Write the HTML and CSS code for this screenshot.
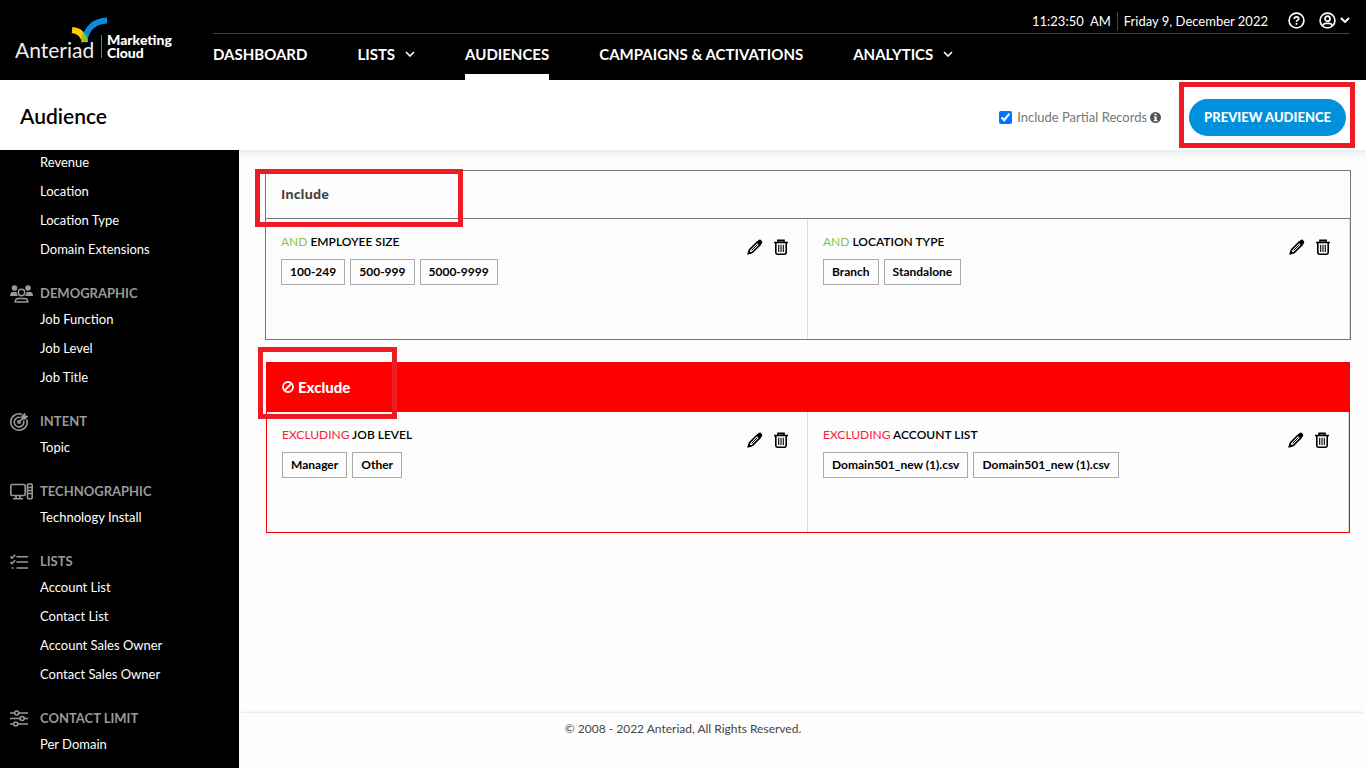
FILE: index.html
```html
<!DOCTYPE html>
<html lang="en">
<head>
<meta charset="utf-8">
<title>Audience</title>
<link rel="stylesheet" href="styles.css">
</head>
<body>
<svg class="defs" aria-hidden="true">
  <symbol id="pencil" viewBox="0 0 16 16">
    <path d="M1.2 14.8 2.6 10.6 10.4 2.8 13.2 5.6 5.4 13.4Z" fill="none" stroke="currentColor" stroke-width="1.6" stroke-linejoin="round"/>
    <path d="M9.3 3.4 11.6 1.1Q13 0 14.4 1.4 16 3 14.9 4.4L12.6 6.7ZM0.4 15.6 2 11.4 4.6 14Z" fill="currentColor"/>
    <path d="M4.6 11.4 10.4 5.6" stroke="currentColor" stroke-width="1"/>
  </symbol>
  <symbol id="trash" viewBox="0 0 16 16">
    <path d="M1 3.500H15M5 3V1.200H11V3M2.800 3.500V13.600Q2.800 15.200 4.200 15.200H11.800Q13.200 15.200 13.200 13.600V3.500" fill="none" stroke="currentColor" stroke-width="1.600"/>
    <path d="M5 1H11V3.500H5Z" fill="currentColor" opacity=".5"/>
    <path d="M5.700 5.800V13M8 5.800V13M10.300 5.800V13" stroke="currentColor" stroke-width="1.100"/>
  </symbol>
  <symbol id="chevron" viewBox="0 0 10 6">
    <path d="M1 1 5 5 9 1" fill="none" stroke="currentColor"/>
  </symbol>
</svg>

<header class="top">
  <a class="logo" href="#" aria-label="Anteriad Marketing Cloud">
    <svg width="160" height="48" viewBox="0 0 160 48">
      <path d="M57 15Q68 16 69.500 27" fill="none" stroke="#fecb00" stroke-width="6"/>
      <path d="M92 5.500C79 6 71 14 69 27" fill="none" stroke="#0a8be0" stroke-width="6"/>
      <path d="M68 17.500Q72.600 20 73 27H66.500Q66 22 68 17.500Z" fill="#8fc31f"/>
      <text class="logo-name" x="0" y="43">Anteriad</text>
      <path d="M86.500 20V43" stroke="#777"/>
      <text class="logo-sub" x="92" y="30">Marketing</text>
      <text class="logo-sub" x="92" y="43">Cloud</text>
    </svg>
  </a>
  <div class="top-main">
    <div class="status">
      <span class="time">11:23:50 &nbsp;AM</span>
      <span class="date">Friday 9, December 2022</span>
      <button class="icon-btn help" aria-label="Help">
        <svg width="17" height="17" viewBox="0 0 17 17" fill="none" stroke="#fff" stroke-width="1.700"><circle cx="8.500" cy="8.500" r="7.400"/><path d="M6.300 7Q6.300 4.900 8.500 4.900T10.700 6.800Q10.700 7.800 9.500 8.300 8.500 8.700 8.500 9.900M8.500 11V12.700"/></svg>
      </button>
      <button class="icon-btn account" aria-label="Account">
        <svg width="17" height="17" viewBox="0 0 17 17" fill="none" stroke="#fff" stroke-width="1.700"><circle cx="8.500" cy="8.500" r="7.400"/><circle cx="8.500" cy="6.700" r="2.500"/><path d="M3.700 13.600Q4.500 11.300 6.500 11.300H10.500Q12.500 11.300 13.300 13.600"/></svg>
        <svg class="thick" width="10" height="6"><use href="#chevron"/></svg>
      </button>
    </div>
    <nav class="nav">
      <a href="#">DASHBOARD</a>
      <a href="#">LISTS<svg width="10" height="6"><use href="#chevron"/></svg></a>
      <a href="#" class="active">AUDIENCES</a>
      <a href="#">CAMPAIGNS &amp; ACTIVATIONS</a>
      <a href="#">ANALYTICS<svg width="10" height="6"><use href="#chevron"/></svg></a>
    </nav>
  </div>
</header>

<div class="page-head">
  <h1>Audience</h1>
  <label class="partial"><input type="checkbox" checked><span>Include Partial Records</span>
    <svg width="11" height="11" viewBox="0 0 10 10"><circle cx="5" cy="5" r="5" fill="#555"/><path d="M4 1.500H6V3H4ZM3.500 4H6V7.300H6.800V8.400H3.400V7.300H4.200V5H3.500Z" fill="#fff"/></svg>
  </label>
  <div class="preview-wrap">
    <button class="preview">PREVIEW AUDIENCE</button>
    <span class="mark mark-preview"></span>
  </div>
</div>

<div class="columns">
  <aside class="side">
    <section>
      <ul><li><a href="#">Revenue</a></li><li><a href="#">Location</a></li><li><a href="#">Location Type</a></li><li><a href="#">Domain Extensions</a></li></ul>
    </section>
    <section>
      <h2><svg width="23" height="18" viewBox="0 0 23 18" fill="#999"><circle cx="4.500" cy="3" r="2.800"/><circle cx="18" cy="3" r="2.800"/><path d="M0 11Q0 7 3 7H6.500Q6.500 9.500 8 11ZM23 11Q23 7 20 7H16.500Q16.500 9.500 15 11Z"/><g fill="none" stroke="#999" stroke-width="1.500"><circle cx="11.500" cy="7.500" r="3.200"/><path d="M5.200 17Q5.200 13.500 8.500 13.500H14.500Q17.800 13.500 17.800 17Z"/></g></svg>DEMOGRAPHIC</h2>
      <ul><li><a href="#">Job Function</a></li><li><a href="#">Job Level</a></li><li><a href="#">Job Title</a></li></ul>
    </section>
    <section>
      <h2><svg width="18" height="18" viewBox="0 0 18 18" fill="none" stroke="#999" stroke-width="1.600"><path d="M12 1.400A8.200 8.200 0 1 0 16.700 6.200"/><path d="M10.500 4.500A4.800 4.800 0 1 0 13.600 7.600"/><circle cx="9" cy="9" r="1.300"/><path d="M9.500 8.500 14 4"/><path d="M12 3.500 14.500 1 15 3 17 3.500 14.500 6 12.300 5.800Z" fill="#999"/></svg>INTENT</h2>
      <ul><li><a href="#">Topic</a></li></ul>
    </section>
    <section>
      <h2><svg width="23" height="17" viewBox="0 0 23 17" fill="none" stroke="#999" stroke-width="1.600"><rect x=".8" y="1.500" width="14.400" height="11" rx="1.500"/><path d="M6 12.500V15.500M10 12.500V15.500M3 15.800H13M17.500 4.500H22M17.500 7.500H22M17.500 10.500H22"/><rect x="17.500" y="1" width="4.700" height="14.800" rx="1"/></svg>TECHNOGRAPHIC</h2>
      <ul><li><a href="#">Technology Install</a></li></ul>
    </section>
    <section>
      <h2><svg width="18" height="16" viewBox="0 0 18 16" fill="none" stroke="#999" stroke-width="1.600"><path d="M6.500 2.800H18M6.500 8H18M6.500 14H18M.5 2.500 2 4 5.200.8M.5 8 2 9.500 5.200 6.300M1.500 14H3.500"/></svg>LISTS</h2>
      <ul><li><a href="#">Account List</a></li><li><a href="#">Contact List</a></li><li><a href="#">Account Sales Owner</a></li><li><a href="#">Contact Sales Owner</a></li></ul>
    </section>
    <section>
      <h2><svg width="18" height="17" viewBox="0 0 18 17" fill="none" stroke="#999" stroke-width="1.600"><path d="M0 3H4.500M9 3H18M0 8.500H10M14.500 8.500H18M0 14H3.500M8 14H18"/><circle cx="6.700" cy="3" r="2"/><circle cx="12.200" cy="8.500" r="2"/><circle cx="5.700" cy="14" r="2"/></svg>CONTACT LIMIT</h2>
      <ul><li><a href="#">Per Domain</a></li></ul>
    </section>
  </aside>

  <div class="content">
    <main>
      <section class="panel include">
        <h2>Include<span class="mark mark-include"></span></h2>
        <div class="cells">
          <div class="cell">
            <div class="cell-head"><h3><span class="op">AND</span> EMPLOYEE SIZE</h3>
              <div class="tools"><button aria-label="Edit"><svg width="16" height="16"><use href="#pencil"/></svg></button><button aria-label="Delete"><svg width="16" height="16"><use href="#trash"/></svg></button></div></div>
            <div class="tags"><span>100-249</span><span>500-999</span><span>5000-9999</span></div>
          </div>
          <div class="cell">
            <div class="cell-head"><h3><span class="op">AND</span> LOCATION TYPE</h3>
              <div class="tools"><button aria-label="Edit"><svg width="16" height="16"><use href="#pencil"/></svg></button><button aria-label="Delete"><svg width="16" height="16"><use href="#trash"/></svg></button></div></div>
            <div class="tags"><span>Branch</span><span>Standalone</span></div>
          </div>
        </div>
      </section>
      <section class="panel exclude">
        <h2><svg width="12" height="12" viewBox="0 0 12 12" fill="none" stroke="#fff" stroke-width="1.800"><circle cx="6" cy="6" r="5"/><path d="M2.500 9.500 9.500 2.500"/></svg>Exclude<span class="mark mark-exclude"></span></h2>
        <div class="cells">
          <div class="cell">
            <div class="cell-head"><h3><span class="op">EXCLUDING</span> JOB LEVEL</h3>
              <div class="tools"><button aria-label="Edit"><svg width="16" height="16"><use href="#pencil"/></svg></button><button aria-label="Delete"><svg width="16" height="16"><use href="#trash"/></svg></button></div></div>
            <div class="tags"><span>Manager</span><span>Other</span></div>
          </div>
          <div class="cell">
            <div class="cell-head"><h3><span class="op">EXCLUDING</span> ACCOUNT LIST</h3>
              <div class="tools"><button aria-label="Edit"><svg width="16" height="16"><use href="#pencil"/></svg></button><button aria-label="Delete"><svg width="16" height="16"><use href="#trash"/></svg></button></div></div>
            <div class="tags"><span>Domain501_new (1).csv</span><span>Domain501_new (1).csv</span></div>
          </div>
        </div>
      </section>
    </main>
    <footer>© 2008 - 2022 Anteriad, All Rights Reserved.</footer>
  </div>
</div>
</body>
</html>
```
FILE: styles.css
```css
* { box-sizing: border-box; }
body {
  margin: 0;
  height: 100vh;
  display: flex;
  flex-direction: column;
  overflow: hidden;
  background: #fdfdfd;
  color: #000;
  font: 13px/19px Lato, "Open Sans", sans-serif;
}
h1, h2, h3, ul { margin: 0; padding: 0; font-weight: normal; }
ul { list-style: none; }
a { color: inherit; text-decoration: none; }
button { font: inherit; border: 0; padding: 0; background: none; color: inherit; cursor: pointer; }
svg { display: block; flex: none; }
.defs { position: absolute; width: 0; height: 0; }

/* top bar */
.top { display: flex; flex: none; height: 80px; padding: 0 16px 0 15px; background: #000; color: #fff; }
.logo { width: 198px; padding-top: 15px; }
.logo-name { font: 21px Lato, sans-serif; fill: #eee; }
.logo-sub { font: 900 14px Lato, sans-serif; fill: #fff; }
.top-main { flex: 1; display: flex; flex-direction: column; }
.status { display: flex; justify-content: flex-end; align-items: center; height: 34px; padding-top: 9px; border-bottom: 1px solid #444; }
.time { padding-right: 6px; }
.date { padding-left: 6px; border-left: 1px solid #444; margin-right: 20px; }
.icon-btn { display: flex; align-items: center; gap: 4px; height: 21px; padding-bottom: 2px; stroke-width: 2; }
.help { margin-right: 14px; }
.nav { flex: 1; display: flex; gap: 50px; font-size: 15px; font-weight: 700; stroke-width: 1.6; }
.nav a { display: flex; align-items: center; gap: 10px; border-bottom: 6px solid transparent; }
.nav a.active { border-color: #fff; }

/* page heading */
.page-head {
  position: relative;
  z-index: 1;
  flex: none;
  display: flex;
  align-items: center;
  height: 70px;
  padding: 0 20px;
  background: #fff;
}
.page-head h1 { flex: 1; font-size: 21px; font-weight: 600; }
.partial { display: flex; align-items: center; color: #777; margin: 4px 28px 0 0; }
.partial input { width: 13px; height: 13px; margin: 0 5px 0 0; accent-color: #0075ff; }
.partial svg { margin-left: 3px; }
.preview-wrap { position: relative; margin-top: 5px; }
.preview { height: 37px; padding: 0 15px; border-radius: 19px; background: #0090dc; color: #fff; font-size: 13px; font-weight: 900; }
.mark { position: absolute; border: 5px solid #ed1c24; pointer-events: none; }
.mark-preview { inset: -17px -9px -12px -10px; }

/* sidebar */
.columns { flex: 1; display: flex; min-height: 0; }
.side { flex: none; width: 239px; padding: 3px 10px 0; display: flex; flex-direction: column; gap: 23px; background: #000; color: #fff; overflow: hidden; }
.side h2 { position: relative; display: flex; align-items: center; height: 23px; margin-bottom: 5px; padding-left: 30px; color: #999; font-size: 13px; font-weight: 700; }
.side h2 svg { position: absolute; left: 0; }
.side ul { display: flex; flex-direction: column; gap: 10px; padding-left: 30px; }

/* content */
.content { flex: 1; display: flex; flex-direction: column; box-shadow: inset 0 7px 8px -6px #dfe1e6; }
main { flex: 1; padding: 20px 15px 0 26px; }
.panel { border: 1px solid #777; }
.panel h2 { position: relative; display: flex; align-items: center; height: 48px; padding-left: 15px; border-bottom: 1px solid #777; color: #444; font-size: 15px; font-weight: 700; }
.panel.include h2 { font-family: "Open Sans", sans-serif; font-size: 13px; }
.panel.exclude { margin: 22px 1px 0; border-color: #f00; }
.panel.exclude h2 { height: 49px; gap: 4px; border-color: #f00; background: #f00; color: #fff; font-weight: 900; }
.mark-include { left: -11px; top: -2px; width: 208px; height: 58px; }
.mark-exclude { left: -9px; top: -16px; width: 139px; height: 72px; }
.cells { display: grid; grid-template-columns: 1fr 1fr; }
.cell { min-height: 120px; padding: 13px 18px 0 15px; border-right: 1px solid #ddd; }
.cell-head { display: flex; justify-content: space-between; height: 27px; }
.cell h3 { font-size: 12px; font-weight: 600; }
.op { color: #8bc34a; font-weight: 400; }
.exclude .op { color: #f5223c; }
.tools { display: flex; gap: 10px; padding-top: 7px; }
.tools button { height: 16px; }
.tags { display: flex; gap: 5px; }
.tags span { height: 26px; padding: 0 8px; border: 1px solid #aaa; line-height: 24px; font-size: 12px; font-weight: 700; }
footer { padding: 6px 239px 0 0; height: 55px; text-align: center; font-size: 12px; color: #444; box-shadow: 0 -3px 3px -3px #ccc; }
```
